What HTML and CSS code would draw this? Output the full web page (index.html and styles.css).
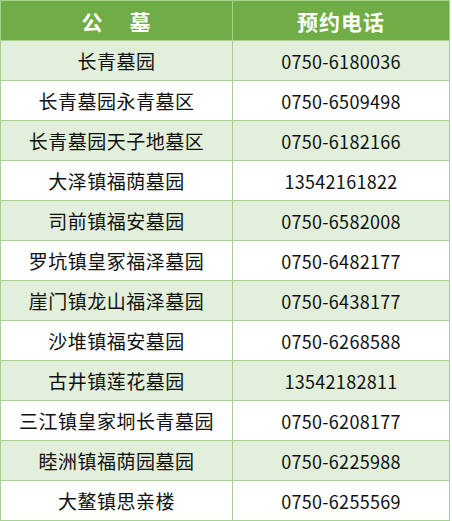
FILE: index.html
```html
<!DOCTYPE html>
<html lang="zh-CN">
<head>
<meta charset="utf-8">
<link rel="stylesheet" href="styles.css">
</head>
<body>
<div class="table">
  <div class="cell head"><span class="gong">公</span><span>墓</span></div>
  <div class="cell head">预约电话</div>
  <div class="cell alt">长青墓园</div><div class="cell alt num">0750-6180036</div>
  <div class="cell">长青墓园永青墓区</div><div class="cell num">0750-6509498</div>
  <div class="cell alt">长青墓园天子地墓区</div><div class="cell alt num">0750-6182166</div>
  <div class="cell">大泽镇福荫墓园</div><div class="cell num">13542161822</div>
  <div class="cell alt">司前镇福安墓园</div><div class="cell alt num">0750-6582008</div>
  <div class="cell">罗坑镇皇冢福泽墓园</div><div class="cell num">0750-6482177</div>
  <div class="cell alt">崖门镇龙山福泽墓园</div><div class="cell alt num">0750-6438177</div>
  <div class="cell">沙堆镇福安墓园</div><div class="cell num">0750-6268588</div>
  <div class="cell alt">古井镇莲花墓园</div><div class="cell alt num">13542182811</div>
  <div class="cell">三江镇皇家坰长青墓园</div><div class="cell num">0750-6208177</div>
  <div class="cell alt">睦洲镇福荫园墓园</div><div class="cell alt num">0750-6225988</div>
  <div class="cell">大鳌镇思亲楼</div><div class="cell num">0750-6255569</div>
</div>
</body>
</html>
```
FILE: styles.css
```css
html, body {
  margin: 0;
  padding: 0;
  background: #ffffff;
}
.table {
  display: grid;
  grid-template-columns: 231px 216px;
  grid-auto-rows: 39px;
  gap: 1px;
  padding: 1px;
  width: 448px;
  background: #a9d08e;
  font-family: "Noto Sans CJK SC", "Noto Sans", sans-serif;
}
.cell {
  background: #ffffff;
  color: #111111;
  font-size: 19px;
  display: flex;
  align-items: center;
  justify-content: center;
  letter-spacing: 0.5px;
}
.cell.alt {
  background: #e2efda;
}
.cell.head {
  background: #70ad47;
  color: #ffffff;
  font-weight: bold;
  font-size: 21px;
  letter-spacing: 1px;
}
.gong {
  margin-right: 26px;
}
.num {
  font-size: 18px;
  letter-spacing: 0.3px;
}
```
